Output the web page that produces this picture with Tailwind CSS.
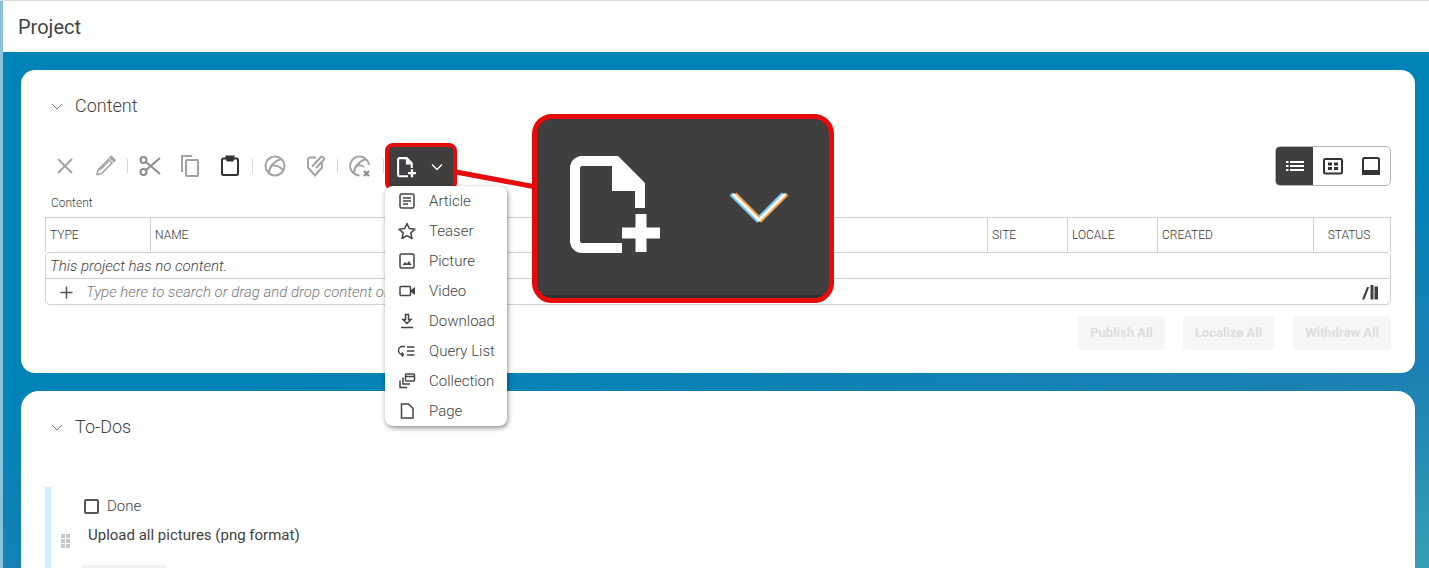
<!DOCTYPE html>
<html lang="en">
    <head>
        <meta charset="UTF-8" />
        <title>Project</title>
        <script src="https://cdn.jsdelivr.net/npm/@tailwindcss/browser@4"></script>
    </head>
    <body class="font-['Roboto',sans-serif] text-[#3f3f3f]">
        <div class="relative w-[1429px] h-[568px] overflow-hidden flex flex-col bg-white border-t border-[#dcdcdc]">
            <div class="absolute left-0 top-0 bottom-0 w-[3px] bg-[#8cc3dc] z-10"></div>

            <!-- page title -->
            <div class="h-[51px] shrink-0 pl-[18px] flex items-center text-[20px] text-[#444]">Project</div>

            <div class="grow pl-[21px] pr-[14px] pt-[18px] flex flex-col gap-[18px] bg-[linear-gradient(170deg,#0183b7_0%,#0183b7_45%,#1b80b2_70%,#3ea5b5_100%)]">
                <!-- content card -->
                <div class="relative h-[303px] shrink-0 bg-white rounded-[14px] px-[24px]">
                    <div class="h-[70px] flex items-center pl-[5px] gap-[11px]">
                        <svg class="w-[14px] h-[14px] mt-[2px]" viewBox="0 0 14 14" fill="none" stroke="#777" stroke-width="1"><path d="M2 5l5 5 5-5" /></svg>
                        <span class="text-[18px] font-light text-[#3f3f3f]">Content</span>
                    </div>

                    <!-- toolbar -->
                    <div class="relative h-[44px] mt-[4px] flex items-center">
                        <div class="flex items-center">
                            <span class="w-[40px] flex justify-center"><svg class="w-[24px] h-[24px]" viewBox="0 0 24 24" fill="none" stroke="#a3a3a3" stroke-width="1.800"><path d="M5 5l14 14M19 5L5 19" /></svg></span>
                            <span class="w-[40px] flex justify-center"><svg class="w-[24px] h-[24px]" viewBox="0 0 24 24" fill="none" stroke="#a3a3a3" stroke-width="1.600"><path d="M4 20.500l1-4.500L15.500 5.500l3.500 3.500L8.500 19.500z" /><path d="M17 3.500l1.500-1 3.500 3.500-1 1.500z" fill="#a3a3a3" /><path d="M7 16l8.500-8.500" /></svg></span>
                            <span class="w-px h-[14px] bg-[#d5d5d5] mx-[2px]"></span>
                            <span class="w-[40px] flex justify-center"><svg class="w-[24px] h-[24px]" viewBox="0 0 24 24" fill="none" stroke="#8c8c8c" stroke-width="2"><circle cx="5.500" cy="6" r="3" /><circle cx="5.500" cy="18" r="3" /><path d="M8 8l14 12M8 16L22 4" /></svg></span>
                            <span class="w-[40px] flex justify-center"><svg class="w-[24px] h-[24px]" viewBox="0 0 24 24" fill="none" stroke="#a3a3a3" stroke-width="2"><path d="M14 2H4v16" /><rect x="8" y="6" width="12" height="16" rx="1" /></svg></span>
                            <span class="w-[40px] flex justify-center"><svg class="w-[24px] h-[24px]" viewBox="0 0 24 24" fill="none" stroke="#333" stroke-width="2"><rect x="4" y="4.500" width="16" height="16.500" rx="1.500" /><path d="M8.500 4.500V2.500h7v2zM8.500 6.500h7" /></svg></span>
                            <span class="w-px h-[14px] bg-[#d5d5d5] ml-[2px]"></span>
                            <span class="w-[44px] flex justify-center"><svg class="w-[24px] h-[24px]" viewBox="0 0 24 24" fill="none" stroke="#a3a3a3" stroke-width="2"><circle cx="12" cy="12" r="9.500" /><path d="M6 19c0-6 5-12 12-14M9 11.500c4-.5 9 1 11 5" /></svg></span>
                            <span class="w-[36px] flex justify-center"><svg class="w-[24px] h-[24px]" viewBox="0 0 24 24" fill="none" stroke="#a3a3a3" stroke-width="2"><path d="M13 3.500H7a2 2 0 0 0-2 2v8l7 8 7-8V9" /><path d="M9 12.500L17.500 3.500a1.800 1.800 0 0 1 3 2.500L13 14" /></svg></span>
                            <span class="w-px h-[14px] bg-[#d5d5d5] ml-[4px]"></span>
                            <span class="w-[44px] flex justify-center"><svg class="w-[24px] h-[24px]" viewBox="0 0 24 24" fill="none" stroke="#a3a3a3" stroke-width="2"><path d="M21 11a9.500 9.500 0 1 0-9.500 10.500M6 19c0-6 5-12 12-14M9 11.500c2-.3 5 0 7 1.300" /><path d="M16 17l5 5M21 17l-5 5" stroke-width="2.200" stroke="#8c8c8c" /></svg></span>
                            <span class="w-px h-[14px] bg-[#d5d5d5] ml-[1px]"></span>
                        </div>

                        <!-- highlighted create button -->
                        <div class="absolute left-[340px] top-[-1px] w-[72px] h-[48px] bg-[#3f3f3f] border-[4px] border-[#e60a0a] rounded-[8px] flex items-center pl-[7px] gap-[13px]">
                            <svg class="w-[21px] h-[22px]" viewBox="28 32 100 105" fill="none" stroke="#fff" stroke-width="10"><path d="M85 129H45a7 7 0 0 1-7-7V49a7 7 0 0 1 7-7h34l24 24v23" /><path d="M75 42v30h28z" fill="#fff" stroke="none" /><path d="M85 114h38M104 95v38" stroke-width="11" /></svg>
                            <svg class="w-[14px] h-[14px]" viewBox="0 0 14 14" fill="none" stroke="#fff" stroke-width="1.300"><path d="M2 4.500l5 5 5-5" /></svg>
                        </div>

                        <!-- view switch -->
                        <div class="ml-auto w-[116px] h-[40px] border border-[#b5b5b5] rounded-[5px] flex overflow-hidden">
                            <span class="w-[38px] bg-[#3f3f3f] flex items-center justify-center"><svg class="w-[24px] h-[24px]" viewBox="0 0 24 24" fill="#fff"><path d="M3 7h2.500v2H3zM7 7h14v2H7zM3 11h2.500v2H3zM7 11h14v2H7zM3 15h2.500v2H3zM7 15h14v2H7z" /></svg></span>
                            <span class="w-[39px] flex items-center justify-center"><svg class="w-[24px] h-[24px]" viewBox="0 0 24 24" fill="none" stroke="#333" stroke-width="2"><rect x="3" y="5" width="18" height="14.500" rx="1.500" /><path d="M7 8.500h4v3H7zM13 8.500h4v3h-4zM7 13h4v3H7zM13 13h4v3h-4z" fill="#333" stroke="none" /></svg></span>
                            <span class="w-[39px] flex items-center justify-center"><svg class="w-[24px] h-[24px]" viewBox="0 0 24 24" fill="none" stroke="#333" stroke-width="2"><rect x="4" y="4" width="16" height="16" rx="1.500" /><path d="M4 17h16v3H4z" fill="#333" /></svg></span>
                        </div>
                    </div>

                    <div class="h-[29px] pl-[6px] pt-[7px] text-[12px] leading-[17px] font-light text-[#3f3f3f]">Content</div>

                    <!-- table -->
                    <div class="w-[1346px]">
                        <div class="h-[35px] flex border-x border-t border-[#d0d0d0] text-[12px] font-light text-[#333]">
                            <div class="w-[105px] pl-[4px] flex items-center border-r border-[#d0d0d0]">TYPE</div>
                            <div class="w-[837px] pl-[4px] flex items-center border-r border-[#d0d0d0]">NAME</div>
                            <div class="w-[80px] pl-[4px] flex items-center border-r border-[#d0d0d0]">SITE</div>
                            <div class="w-[90px] pl-[4px] flex items-center border-r border-[#d0d0d0]">LOCALE</div>
                            <div class="w-[156px] pl-[4px] flex items-center border-r border-[#d0d0d0]">CREATED</div>
                            <div class="grow pr-[6px] flex items-center justify-center">STATUS</div>
                        </div>
                        <div class="border border-[#d0d0d0] rounded-[5px]">
                            <div class="h-[26px] pl-[4px] pt-[1px] flex items-center border-b border-[#d0d0d0] text-[15px] italic font-light text-[#3f3f3f]">This project has no content.</div>
                            <div class="h-[25px] pt-[1px] flex items-center pl-[13px] pr-[11px]">
                                <svg class="w-[15px] h-[15px] shrink-0" viewBox="0 0 15 15" fill="none" stroke="#555" stroke-width="1.500"><path d="M1.500 7.500h12M7.500 1.500v12" /></svg>
                                <span class="ml-[12px] text-[15px] italic font-light text-[#777]">Type here to search or drag and drop content or</span>
                                <svg class="ml-auto w-[18px] h-[18px]" viewBox="0 0 18 18" fill="#3f3f3f"><path d="M1 16.500L6 4h2.200L3.400 16.500zM9.500 2h3v14.500h-3zM13.500 3.500H17v13h-3.500z" /></svg>
                            </div>
                        </div>
                    </div>

                    <div class="w-[1346px] mt-[11px] flex justify-end text-[13px] font-bold text-[#dedede]">
                        <div class="w-[87px] h-[34px] rounded-[4px] bg-[#f6f6f6] flex items-center justify-center">Publish All</div>
                        <div class="ml-[18px] w-[91px] h-[34px] rounded-[4px] bg-[#f6f6f6] flex items-center justify-center">Localize All</div>
                        <div class="ml-[19px] w-[98px] h-[34px] rounded-[4px] bg-[#f6f6f6] flex items-center justify-center">Withdraw All</div>
                    </div>
                </div>

                <!-- to-dos card -->
                <div class="h-[220px] shrink-0 bg-white rounded-[18px] px-[24px]">
                    <div class="h-[70px] flex items-center pl-[5px] gap-[11px]">
                        <svg class="w-[14px] h-[14px] mt-[2px]" viewBox="0 0 14 14" fill="none" stroke="#777" stroke-width="1"><path d="M2 5l5 5 5-5" /></svg>
                        <span class="text-[18px] font-light text-[#3f3f3f]">To-Dos</span>
                    </div>
                    <div class="mt-[26px] border-l-[6px] border-[#d2edff] h-[120px] relative">
                        <div class="grid grid-cols-2 gap-px w-[9px] absolute left-[10px] top-[47px]">
                            <span class="h-[4px] w-[4px] bg-[#c8c8c8]"></span><span class="h-[4px] w-[4px] bg-[#c8c8c8]"></span>
                            <span class="h-[4px] w-[4px] bg-[#c8c8c8]"></span><span class="h-[4px] w-[4px] bg-[#c8c8c8]"></span>
                            <span class="h-[4px] w-[4px] bg-[#c8c8c8]"></span><span class="h-[4px] w-[4px] bg-[#c8c8c8]"></span>
                        </div>
                        <div class="pl-[33px] pt-[8px] flex items-center gap-[8px] text-[15px] font-light text-[#3f3f3f]">
                            <span class="w-[15px] h-[15px] border-2 border-[#555] rounded-[2px]"></span>
                            <span>Done</span>
                        </div>
                        <div class="pl-[37px] mt-[6px] text-[15px] text-[#3f3f3f]">Upload all pictures (png format)</div>
                        <div class="ml-[30px] mt-[19px] w-[86px] h-[30px] rounded-[4px] bg-[#f1f1f1]"></div>
                    </div>
                </div>
            </div>

            <!-- dropdown menu -->
            <div class="absolute left-[385px] top-[185px] w-[122px] h-[240px] bg-white rounded-[8px] shadow-[1px_2px_5px_rgba(0,0,0,0.45)] z-20 text-[15px] font-light text-[#444] flex flex-col">
                <div class="h-[30px] flex items-center pl-[13px] gap-[13px]"><svg class="w-[18px] h-[18px] shrink-0" viewBox="0 0 18 18" fill="none" stroke="#444" stroke-width="1.500"><rect x="2" y="2" width="14" height="14" rx="1.500" /><path d="M5 6h8M5 9h8M5 12h5" /></svg><span>Article</span></div>
                <div class="h-[30px] flex items-center pl-[13px] gap-[13px]"><svg class="w-[18px] h-[18px] shrink-0" viewBox="0 0 18 18" fill="none" stroke="#444" stroke-width="1.500" stroke-linejoin="round"><path d="M9 1.500l2.300 5 5.700.7-4.200 3.700 1.200 5.600L9 13.700 4 16.500l1.200-5.600L1 7.200l5.700-.7z" /></svg><span>Teaser</span></div>
                <div class="h-[30px] flex items-center pl-[13px] gap-[13px]"><svg class="w-[18px] h-[18px] shrink-0" viewBox="0 0 18 18" fill="none" stroke="#444" stroke-width="1.500"><rect x="2" y="2" width="14" height="14" rx="1.500" /><path d="M4.500 13l2.500-3 1.800 1.800L11 9l2.500 4z" fill="#444" stroke="none" /></svg><span>Picture</span></div>
                <div class="h-[30px] flex items-center pl-[13px] gap-[13px]"><svg class="w-[18px] h-[18px] shrink-0" viewBox="0 0 18 18" fill="none" stroke="#444" stroke-width="1.500"><rect x="2" y="4.500" width="10.500" height="9" rx="1" /><path d="M13 8l4-3v8l-4-3z" fill="#444" stroke="none" /></svg><span>Video</span></div>
                <div class="h-[30px] flex items-center pl-[13px] gap-[13px]"><svg class="w-[18px] h-[18px] shrink-0" viewBox="0 0 18 18" fill="none" stroke="#444" stroke-width="1.500"><path d="M3 15.500h12M7.500 2.500h3v5h2.500L9 11.500 5 7.500h2.500z" /></svg><span>Download</span></div>
                <div class="h-[30px] flex items-center pl-[13px] gap-[13px]"><svg class="w-[18px] h-[18px] shrink-0" viewBox="0 0 18 18" fill="none" stroke="#444" stroke-width="1.500"><path d="M7 4.500H4.500a4 4 0 0 0 0 8H6M5 10.500l-1.500 2 1.500 2M9 5h7.500M9 9h7.500M9 13h7.500" /></svg><span>Query List</span></div>
                <div class="h-[30px] flex items-center pl-[13px] gap-[13px]"><svg class="w-[18px] h-[18px] shrink-0" viewBox="0 0 18 18" fill="none" stroke="#444" stroke-width="1.500"><rect x="7.500" y="2" width="9" height="7" rx="1" /><path d="M7.500 4.500h9" /><path d="M5 5.500v6.500h7M2 8.500V15.500h7" /></svg><span>Collection</span></div>
                <div class="h-[30px] flex items-center pl-[13px] gap-[13px]"><svg class="w-[18px] h-[18px] shrink-0" viewBox="0 0 18 18" fill="none" stroke="#444" stroke-width="1.500"><path d="M3.500 2h7l4.500 4.500V16H3.500z" /></svg><span>Page</span></div>
            </div>

            <!-- red connector line and enlarged callout -->
            <svg class="absolute left-0 top-0 z-20" width="560" height="200" fill="none" stroke="#e60a0a" stroke-width="5"><path d="M456 171l80 15" /></svg>
            <div class="absolute left-[532px] top-[113px] w-[302px] h-[189px] bg-[#3f3f3f] border-[5px] border-[#e60a0a] rounded-[20px] overflow-hidden z-20">
                <svg class="absolute left-0 top-0" width="292" height="179" viewBox="0 0 292 179" fill="none" stroke="#fff" stroke-width="10">
                    <path d="M85 129H45a7 7 0 0 1-7-7V49a7 7 0 0 1 7-7h34l24 24v23" />
                    <path d="M75 42v30h28z" fill="#fff" stroke="none" />
                    <path d="M85 114h38M104 95v38" stroke-width="11" />
                    <path d="M194 75l26 26 26-26" stroke="#6fc3f5" stroke-width="4" />
                    <path d="M198 75l26 26 26-26" stroke="#e8a24e" stroke-width="4" />
                    <path d="M196 75l26 26 26-26" stroke="#fff" stroke-width="3" />
                </svg>
                <div class="absolute left-0 right-0 bottom-0 h-[3px] bg-[#2f2f2f]"></div>
            </div>
        </div>
    </body>
</html>
